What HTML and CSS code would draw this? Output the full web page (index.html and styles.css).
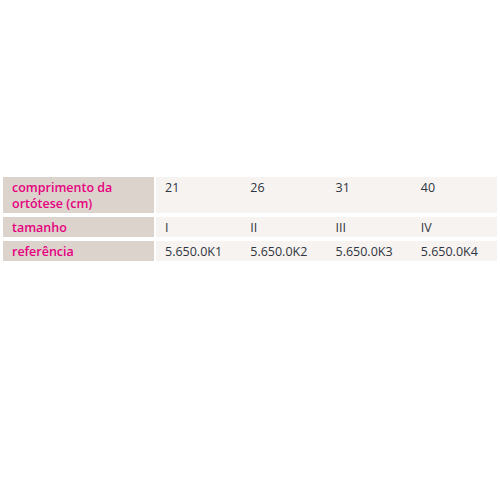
FILE: index.html
```html
<!DOCTYPE html>
<html lang="pt">
<head>
<meta charset="utf-8">
<link rel="stylesheet" href="styles.css">
</head>
<body>
<table class="spec">
  <tr>
    <th>comprimento da<br>ortótese (cm)</th>
    <td>21</td><td>26</td><td>31</td><td>40</td>
  </tr>
  <tr>
    <th>tamanho</th>
    <td>I</td><td>II</td><td>III</td><td>IV</td>
  </tr>
  <tr>
    <th>referência</th>
    <td>5.650.0K1</td><td>5.650.0K2</td><td>5.650.0K3</td><td>5.650.0K4</td>
  </tr>
</table>
</body>
</html>
```
FILE: styles.css
```css
html, body {
  margin: 0;
  padding: 0;
  background: #ffffff;
}
.spec {
  margin: 173px 3px 0 3px;
  width: 494px;
  border-collapse: separate;
  border-spacing: 0 4px;
  table-layout: fixed;
  font-family: "Open Sans", "Noto Sans", sans-serif;
  font-size: 12.5px;
  line-height: 16px;
}
.spec th {
  width: 142px;
  text-align: left;
  vertical-align: top;
  font-weight: 600;
  color: #e5007e;
  background: #ddd3cd;
  padding: 3px 0 1px 9px;
  border-right: 2px solid #ffffff;
}
.spec td {
  vertical-align: top;
  color: #2f3540;
  background: #f7f3f1;
  padding: 3px 0 1px 9px;
}
```
